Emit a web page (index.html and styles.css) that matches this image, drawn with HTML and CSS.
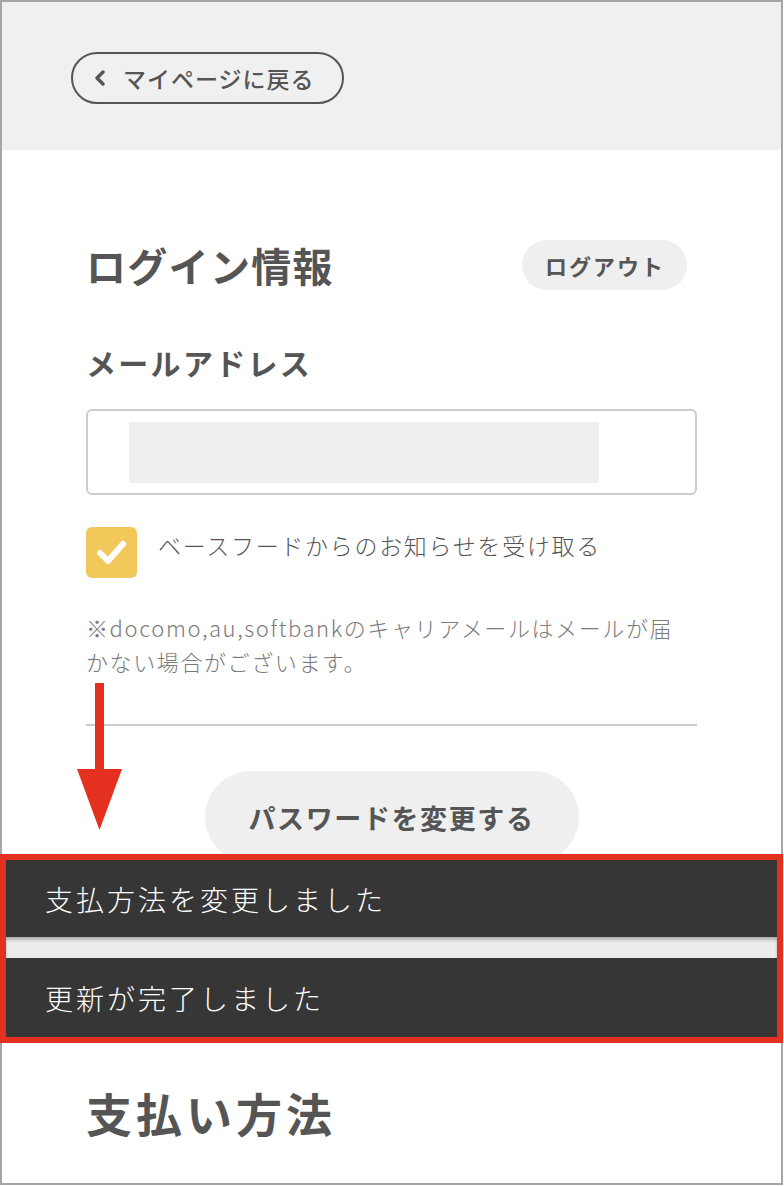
FILE: index.html
```html
<!DOCTYPE html>
<html lang="ja">
<head>
    <meta charset="UTF-8">
    <meta name="viewport" content="width=784, initial-scale=1.0">
    <title>会員情報</title>
    <link rel="stylesheet" href="styles.css">
</head>
<body>
    <div class="frame">
        <div class="header">
            <a class="back-btn" href="#">
                <svg class="chevron" width="12" height="16" viewBox="0 0 12 16">
                    <path d="M9 2 L3 8 L9 14" fill="none" stroke="#555" stroke-width="3.4" stroke-linecap="round" stroke-linejoin="round"/>
                </svg>
                <span>マイページに戻る</span>
            </a>
        </div>

        <div class="content">
            <div class="section-head">
                <h2 class="section-title">ログイン情報</h2>
                <button class="logout">ログアウト</button>
            </div>

            <div class="field-label">メールアドレス</div>
            <div class="email-input">
                <div class="email-mask"></div>
            </div>

            <label class="opt-in">
                <span class="checkbox">
                    <svg width="51" height="51" viewBox="0 0 51 51">
                        <path d="M14 26 L22 34 L37 17" fill="none" stroke="#fff" stroke-width="6" stroke-linecap="round" stroke-linejoin="round"/>
                    </svg>
                </span>
                <span class="opt-in-text">ベースフードからのお知らせを受け取る</span>
            </label>

            <p class="note">※docomo,au,softbankのキャリアメールはメールが届<br>かない場合がございます。</p>

            <div class="divider"></div>

            <button class="pw-btn">パスワードを変更する</button>

            <h2 class="pay-title">支払い方法</h2>
        </div>
    </div>

    <!-- annotation arrow -->
    <svg class="arrow" width="46" height="148" viewBox="0 0 46 148">
        <rect x="18" y="0" width="9" height="90" fill="#e3301f"/>
        <polygon points="0,86 45,86 22.5,147" fill="#e3301f"/>
    </svg>

    <!-- toasts, outlined in red -->
    <div class="toast-stack">
        <div class="toast">支払方法を変更しました</div>
        <div class="toast-gap"></div>
        <div class="toast toast-last">更新が完了しました</div>
    </div>
</body>
</html>
```

FILE: styles.css
```css
* {
    margin: 0;
    padding: 0;
    box-sizing: border-box;
}
body {
    position: relative;
    width: 784px;
    height: 1186px;
    background: #fff;
    color: #555;
    font-family: "Noto Sans CJK JP", "Noto Sans", sans-serif;
    overflow: hidden;
}
.frame {
    width: 783px;
    height: 1185px;
    border: 2px solid #a6a6a6;
    overflow: hidden;
}
.header {
    height: 148px;
    background: #f0f0f0;
    padding: 50px 0 0 69px;
}
.back-btn {
    display: inline-flex;
    align-items: center;
    height: 52px;
    padding: 0 27px 0 21px;
    border: 2px solid #555;
    border-radius: 26px;
    color: #555;
    text-decoration: none;
    font-size: 23px;
    font-weight: 500;
    letter-spacing: 1px;
    gap: 17px;
}
.content {
    padding: 0 84px 0 84px;
}
.section-head {
    display: flex;
    justify-content: space-between;
    align-items: center;
    height: 50px;
    margin-top: 90px;
}
.section-title {
    font-size: 40px;
    font-weight: 700;
    line-height: 50px;
    letter-spacing: 1.3px;
}
.logout {
    height: 50px;
    padding: 0 22px 0 23px;
    margin-right: 10px;
    border: none;
    border-radius: 25px;
    background: #efefef;
    color: #555;
    font-family: inherit;
    font-size: 22px;
    font-weight: 700;
    letter-spacing: 2px;
}
.field-label {
    margin-top: 52px;
    font-size: 30px;
    font-weight: 700;
    line-height: 40px;
    letter-spacing: 2.3px;
}
.email-input {
    margin-top: 27px;
    height: 86px;
    border: 2px solid #cdcdcd;
    border-radius: 6px;
    padding: 11px 0 0 41px;
}
.email-mask {
    width: 470px;
    height: 61px;
    background: #eee;
}
.opt-in {
    display: flex;
    align-items: flex-start;
    gap: 21px;
    margin-top: 32px;
}
.checkbox {
    width: 51px;
    height: 51px;
    border-radius: 6px;
    background: #f2c85b;
    flex-shrink: 0;
}
.checkbox svg {
    display: block;
}
.opt-in-text {
    font-size: 23px;
    font-weight: 300;
    line-height: 36px;
    letter-spacing: 1.7px;
}
.note {
    margin-top: 32px;
    font-size: 22px;
    font-weight: 300;
    line-height: 34px;
    letter-spacing: 1.6px;
    color: #7b7b7b;
}
.divider {
    margin-top: 46px;
    height: 2px;
    background: #cbcbcb;
}
.pw-btn {
    display: block;
    width: 374px;
    height: 92px;
    margin: 45px auto 0;
    border: none;
    border-radius: 46px;
    background: #efefef;
    color: #555;
    font-family: inherit;
    font-size: 27px;
    font-weight: 700;
    letter-spacing: 1.6px;
}
.pay-title {
    margin-top: 219px;
    font-size: 46px;
    font-weight: 700;
    line-height: 60px;
    letter-spacing: 4px;
}
.arrow {
    position: absolute;
    left: 77px;
    top: 683px;
}
.toast-stack {
    position: absolute;
    left: 0;
    top: 854px;
    width: 783px;
    border: 6px solid #e3301f;
}
.toast {
    display: flex;
    align-items: center;
    height: 77px;
    padding-left: 39px;
    background: #363636;
    color: #fff;
    font-size: 28px;
    font-weight: 300;
    letter-spacing: 3px;
}
.toast-last {
    height: 79px;
}
.toast-gap {
    height: 21px;
    background: #ececec;
    box-shadow: inset 0 3px 3px rgba(0, 0, 0, 0.25);
}
```
